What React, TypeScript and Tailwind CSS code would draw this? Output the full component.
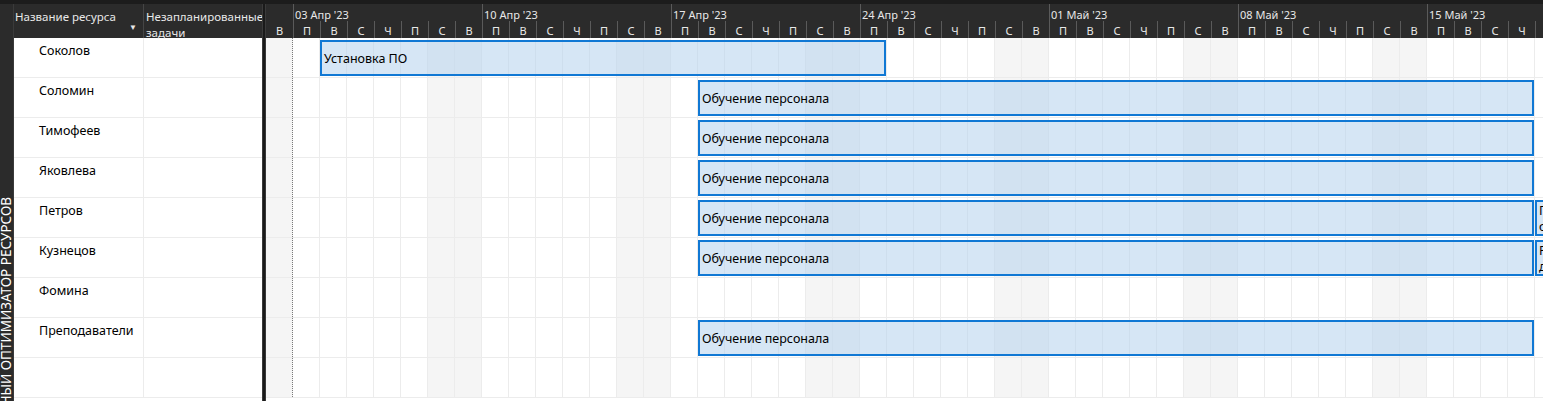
import React from 'react';

const DAY = 27;
const DAYS = 50;
const letters = ['В', 'П', 'В', 'С', 'Ч', 'П', 'С'];
const weeks = ["03 Апр '23", "10 Апр '23", "17 Апр '23", "24 Апр '23", "01 Май '23", "08 Май '23", "15 Май '23"];

interface Bar {
    start: number;
    end: number;
    text: React.ReactNode;
}

interface Row {
    name: string;
    bars: Bar[];
}

const training: Bar = { start: 16, end: 47, text: 'Обучение персонала' };

const rows: Row[] = [
    { name: 'Соколов', bars: [{ start: 2, end: 23, text: 'Установка ПО' }] },
    { name: 'Соломин', bars: [training] },
    { name: 'Тимофеев', bars: [training] },
    { name: 'Яковлева', bars: [training] },
    { name: 'Петров', bars: [training, { start: 47, end: 55, text: <>Подготовка<br />отчета</> }] },
    { name: 'Кузнецов', bars: [training, { start: 47, end: 55, text: <>Резервное<br />дублирование</> }] },
    { name: 'Фомина', bars: [] },
    { name: 'Преподаватели', bars: [training] },
    { name: '', bars: [] },
];

const isWeekend = (d: number) => d % 7 === 0 || d % 7 === 6;

const DayGrid: React.FC = () => (
    <div className="flex h-full">
        {Array.from({ length: DAYS }, (_, d) => (
            <div
                key={d}
                className={
                    'h-full w-[27px] shrink-0 border-r ' +
                    (d === 0 ? 'border-dotted border-[#7a7a7a] ' : 'border-[#ececec] ') +
                    (isWeekend(d) ? 'bg-[#f5f5f5]' : 'bg-white')
                }
            />
        ))}
    </div>
);

const TimelineHeader: React.FC = () => (
    <div className="flex h-[34px] flex-col bg-[#2b2b2b] text-[11px] leading-[16px] text-[#e8e8e8]">
        <div className="flex h-[17px]">
            <div className="w-[27px] shrink-0" />
            {weeks.map((w) => (
                <div key={w} className="w-[189px] shrink-0 border-l border-[#5a5a5a] pl-[1px] pt-[3px] whitespace-nowrap">
                    {w}
                </div>
            ))}
        </div>
        <div className="flex h-[17px]">
            {Array.from({ length: DAYS }, (_, d) => (
                <div
                    key={d}
                    className={
                        'flex w-[27px] shrink-0 items-center justify-center pt-[2px] ' +
                        (d === 0 ? '' : 'border-l border-[#5a5a5a]')
                    }
                >
                    {letters[d % 7]}
                </div>
            ))}
        </div>
    </div>
);

const GanttRow: React.FC<{ row: Row }> = ({ row }) => (
    <div className="relative h-[40px] border-b border-[#ececec]">
        <DayGrid />
        {row.bars.map((b, i) => (
            <div
                key={i}
                className="absolute top-[2px] flex h-[36px] items-center overflow-hidden border-2 border-[#1078d4] bg-[rgba(187,213,238,0.6)] pl-[2px] pt-[1px] text-[12.5px] leading-[16px] whitespace-nowrap text-black"
                style={{ left: b.start * DAY, width: (b.end - b.start) * DAY - 1 }}
            >
                <span>{b.text}</span>
            </div>
        ))}
    </div>
);

export default function App() {
    return (
        <div
            className="flex h-[401px] w-[1543px] flex-col overflow-hidden bg-white"
            style={{ fontFamily: '"Noto Sans", "Open Sans", sans-serif' }}
        >
            <div className="h-[4px] shrink-0 bg-[#1c1c1c]" />
            <div className="flex min-h-0 flex-1">
                {/* Vertical view label */}
                <div className="flex w-[14px] shrink-0 flex-col overflow-hidden border-r border-[#3a3a3a] bg-[#2b2b2b] pt-[193px]">
                    <div className="rotate-180 whitespace-nowrap text-[13.5px] leading-[13px] text-white [writing-mode:vertical-rl]">
                        ВИЗУАЛЬНЫЙ ОПТИМИЗАТОР РЕСУРСОВ
                    </div>
                </div>

                {/* Resource table */}
                <div className="flex w-[248px] shrink-0 flex-col">
                    <div className="flex h-[34px] shrink-0 bg-[#2b2b2b] text-[11.5px] leading-[16px] text-[#e8e8e8]">
                        <div className="relative w-[130px] shrink-0 border-r border-[#454545] pl-[1px] pt-[5px]">
                            Название ресурса
                            <span className="absolute right-[6px] top-[19px] text-[8px] leading-[8px]">▼</span>
                        </div>
                        <div className="flex-1 pl-[2px] pt-[5px] leading-[16px] whitespace-nowrap">
                            Незапланированные
                            <br />
                            задачи
                        </div>
                    </div>
                    {rows.map((r, i) => (
                        <div key={i} className="flex h-[40px] shrink-0 border-b border-[#ececec] text-[12.5px] leading-[18px] text-black">
                            <div className="w-[130px] shrink-0 border-r border-[#ececec] pl-[25px] pt-[4px]">{r.name}</div>
                            <div className="flex-1" />
                        </div>
                    ))}
                </div>

                {/* Splitter */}
                <div className="w-[4px] shrink-0 border-x border-[#3a3a3a] bg-[#1a1a1a]" />

                {/* Timeline */}
                <div className="flex min-w-0 flex-1 flex-col overflow-hidden">
                    <TimelineHeader />
                    {rows.map((r, i) => (
                        <GanttRow key={i} row={r} />
                    ))}
                </div>
            </div>
        </div>
    );
}
